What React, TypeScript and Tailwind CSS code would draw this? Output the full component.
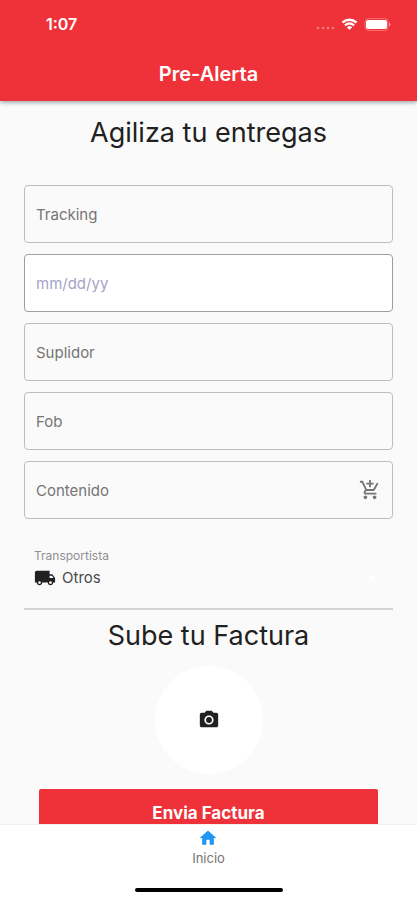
import { ReactNode } from "react"
import {
    MdHome,
    MdLocalShipping,
    MdOutlineAddShoppingCart,
    MdPhotoCamera,
} from "react-icons/md"

function StatusBar() {
    return (
        <div className="flex h-12 items-center justify-between pl-[46px] pr-[26px]">
            <span className="text-base font-semibold">1:07</span>
            <div className="flex items-center gap-1.5">
                <svg width="19" height="12" viewBox="0 0 19 12" fill="#fff" opacity="0.35" aria-hidden="true">
                    <circle cx="2" cy="10" r="1.3" />
                    <circle cx="7" cy="10" r="1.3" />
                    <circle cx="12" cy="10" r="1.3" />
                    <circle cx="17" cy="10" r="1.3" />
                </svg>
                <svg width="17" height="13" viewBox="0 0 17 12" fill="#fff" aria-hidden="true">
                    <path d="M8.5 2.4c2.3 0 4.4.9 6 2.4.1.1.3.1.4 0l1.2-1.2c.1-.1.1-.3 0-.5a11 11 0 0 0-15.2 0c-.1.2-.1.4 0 .5l1.2 1.2c.1.1.3.1.4 0a8.7 8.7 0 0 1 6-2.4z" />
                    <path d="M8.5 6.3c1.3 0 2.5.5 3.4 1.3.1.1.3.1.5 0l1.2-1.2c.1-.1.1-.3 0-.5a7.4 7.4 0 0 0-10.2 0c-.1.2-.1.4 0 .5l1.2 1.2c.2.1.4.1.5 0 .9-.8 2.1-1.3 3.4-1.3z" />
                    <path d="M10.9 9c.1-.1.1-.3 0-.4a3.7 3.7 0 0 0-4.8 0c-.1.1-.1.3 0 .4l2.2 2.3c.1.1.3.1.4 0z" />
                </svg>
                <svg width="27" height="13" viewBox="0 0 27 13" fill="#fff" aria-hidden="true">
                    <rect x="1" y="0.5" width="23" height="12" rx="3.5" fill="none" stroke="#fff" strokeOpacity="0.3" />
                    <rect x="2" y="2" width="21" height="9" rx="2" />
                    <path d="M25 4.5v4c.8-.3 1.4-1.1 1.4-2s-.6-1.7-1.4-2z" opacity="0.5" />
                </svg>
            </div>
        </div>
    )
}

function Field({ label, className = "border-[#bdbdbd]", children }: { label: string; className?: string; children?: ReactNode }) {
    return (
        <div className={`flex h-[58px] items-center rounded border px-[11px] ${className}`}>
            <input
                type="text"
                aria-label={label}
                placeholder={label}
                className="h-full min-w-0 flex-1 bg-transparent text-[15px] outline-none placeholder:text-inherit"
            />
            {children}
        </div>
    )
}

export default function App() {
    return (
        <div className="flex h-screen flex-col bg-[#fafafa] font-['Inter','Liberation_Sans',sans-serif] text-[#757575]">
            <header className="z-10 shrink-0 bg-[#ef3239] pb-px text-white shadow-[0_2px_4px_rgba(0,40,50,0.35)]">
                <StatusBar />
                <h1 className="text-center text-xl leading-[52px] font-semibold">Pre-Alerta</h1>
            </header>

            <main className="min-h-0 flex-1 overflow-y-auto [scrollbar-width:none]">
                <form className="flex flex-col px-6 pt-4" onSubmit={(e) => e.preventDefault()}>
                    <h2 className="text-center text-[27px] leading-8 text-[#212121]">Agiliza tu entregas</h2>

                    <div className="mt-9 flex flex-col gap-[11px]">
                        <Field label="Tracking" />
                        <Field label="mm/dd/yy" className="border-[#9e9e9e] bg-white text-[#a5a3c5]" />
                        <Field label="Suplidor" />
                        <Field label="Fob" />
                        <Field label="Contenido">
                            <button type="button" aria-label="Agregar contenido">
                                <MdOutlineAddShoppingCart size={22} />
                            </button>
                        </Field>
                    </div>

                    <div className="mt-[29px] flex flex-col border-b-2 border-[#d2d2d2] px-2.5 pb-[18px]">
                        <label htmlFor="carrier" className="text-xs leading-4 text-[#909090]">
                            Transportista
                        </label>
                        <div className="mt-0.5 flex items-center gap-1.5 text-[#212121]">
                            <MdLocalShipping size={22} className="shrink-0" />
                            <select
                                id="carrier"
                                className="h-6 min-w-0 flex-1 appearance-none bg-transparent text-[15px] text-[#4a4a4a] outline-none"
                            >
                                <option>Otros</option>
                            </select>
                            <span className="mr-2 size-1.5 rounded-full bg-white" />
                        </div>
                    </div>

                    <h2 className="mt-2.5 text-center text-[27px] leading-8 text-[#212121]">Sube tu Factura</h2>

                    <button
                        type="button"
                        aria-label="Tomar foto"
                        className="mt-3.5 flex size-[108px] items-center justify-center self-center rounded-full bg-white text-[#212121]"
                    >
                        <MdPhotoCamera size={22} />
                    </button>

                    <button
                        type="submit"
                        className="mx-[15px] mt-[15px] mb-6 h-[50px] rounded-xs bg-[#ef3239] text-[17px] font-bold text-white"
                    >
                        Envia Factura
                    </button>
                </form>
            </main>

            <nav className="flex shrink-0 flex-col items-center border-t border-[#f0f0f0] bg-white pt-[3px] pb-2">
                <a href="#inicio" className="flex flex-col items-center">
                    <MdHome size={20} className="text-[#2196f3]" />
                    <span className="text-[13px] leading-5">Inicio</span>
                </a>
                <span className="mt-5 h-1 w-[148px] rounded-full bg-black" />
            </nav>
        </div>
    )
}
